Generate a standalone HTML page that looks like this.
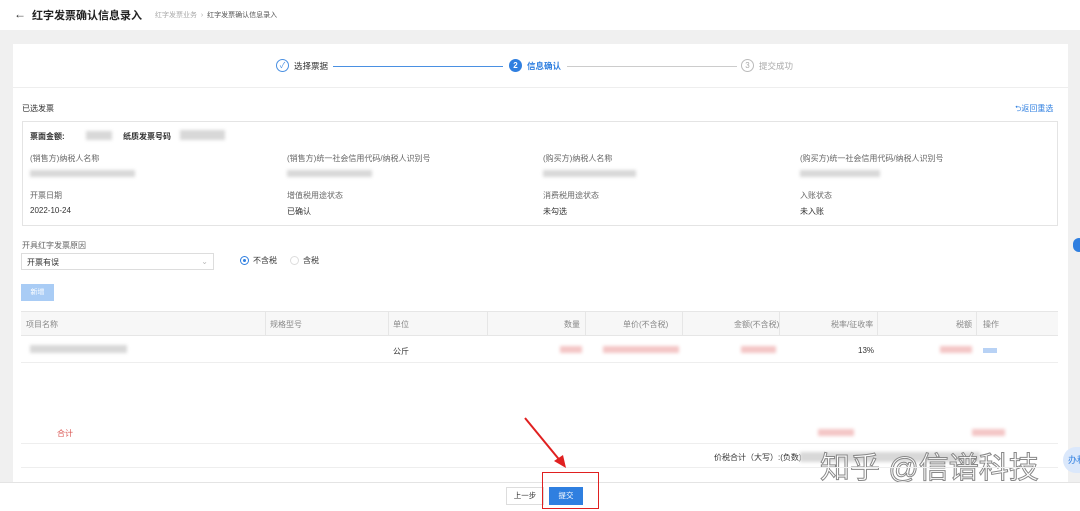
<!DOCTYPE html><html><head><meta charset="utf-8"><style>
*{margin:0;padding:0;box-sizing:border-box}
body{width:1080px;height:511px;overflow:hidden;background:#f0f0f0;font-family:"Liberation Sans","Noto Sans CJK SC",sans-serif;font-size:8px;color:#333;position:relative}
.a{position:absolute}
.blur{position:absolute;background:#d8d8d8;filter:blur(1.5px)}
.pink{position:absolute;background:#f4c6c6;filter:blur(1.5px)}
.g{color:#666}
</style></head><body>
<div class="a" style="left:0;top:0;width:1080px;height:30px;background:#fff"></div>
<div class="a" style="left:14px;top:7px;font-size:12px">←</div>
<div class="a" style="left:32px;top:7px;font-size:11px;font-weight:bold;color:#222">红字发票确认信息录入</div>
<div class="a" style="left:155px;top:10px;font-size:7px;color:#aaa">红字发票业务 &nbsp;›&nbsp; <span style="color:#555">红字发票确认信息录入</span></div>
<div class="a" style="left:13px;top:44px;width:1055px;height:440px;background:#fff"></div>
<div class="a" style="left:13px;top:87px;width:1055px;height:1px;background:#eee"></div>
<div class="a" style="left:276px;top:59px;width:13px;height:13px;border:1px solid #4a90e2;border-radius:50%;color:#4a90e2;font-size:8px;text-align:center;line-height:11px">✓</div>
<div class="a" style="left:294px;top:60px;font-size:8.5px">选择票据</div>
<div class="a" style="left:333px;top:66px;width:170px;height:1px;background:#4a90e2"></div>
<div class="a" style="left:509px;top:59px;width:13px;height:13px;background:#2f7fe0;border-radius:50%;color:#fff;font-size:8px;text-align:center;line-height:13px;font-weight:bold">2</div>
<div class="a" style="left:527px;top:60px;font-size:8.5px;color:#2f7fe0;font-weight:bold">信息确认</div>
<div class="a" style="left:567px;top:66px;width:170px;height:1px;background:#ccc"></div>
<div class="a" style="left:741px;top:59px;width:13px;height:13px;border:1px solid #bbb;border-radius:50%;color:#aaa;font-size:8px;text-align:center;line-height:11px">3</div>
<div class="a" style="left:759px;top:60px;font-size:8.5px;color:#aaa">提交成功</div>
<div class="a" style="left:22px;top:103px;font-size:8px">已选发票</div>
<div class="a" style="left:1015px;top:103px;font-size:8px;color:#2f7fe0">⮌返回重选</div>
<div class="a" style="left:22px;top:121px;width:1036px;height:105px;border:1px solid #e4e4e4"></div>
<div class="a" style="left:30px;top:131px;font-size:8px;font-weight:bold">票面金额:</div><div class="blur" style="left:86px;top:131px;width:26px;height:9px"></div>
<div class="a" style="left:123px;top:131px;font-size:8px;font-weight:bold">纸质发票号码</div><div class="blur" style="left:180px;top:130px;width:45px;height:10px"></div>
<div class="a g" style="left:30px;top:153px">(销售方)纳税人名称</div><div class="blur" style="left:30px;top:170px;width:105px;height:7px"></div>
<div class="a g" style="left:287px;top:153px">(销售方)统一社会信用代码/纳税人识别号</div><div class="blur" style="left:287px;top:170px;width:85px;height:7px"></div>
<div class="a g" style="left:543px;top:153px">(购买方)纳税人名称</div><div class="blur" style="left:543px;top:170px;width:93px;height:7px"></div>
<div class="a g" style="left:800px;top:153px">(购买方)统一社会信用代码/纳税人识别号</div><div class="blur" style="left:800px;top:170px;width:80px;height:7px"></div>
<div class="a g" style="left:30px;top:190px">开票日期</div><div class="a" style="left:30px;top:206px">2022-10-24</div>
<div class="a g" style="left:287px;top:190px">增值税用途状态</div><div class="a" style="left:287px;top:206px">已确认</div>
<div class="a g" style="left:543px;top:190px">消费税用途状态</div><div class="a" style="left:543px;top:206px">未勾选</div>
<div class="a g" style="left:800px;top:190px">入账状态</div><div class="a" style="left:800px;top:206px">未入账</div>
<div class="a g" style="left:22px;top:240px">开具红字发票原因</div>
<div class="a" style="left:21px;top:253px;width:193px;height:17px;border:1px solid #ddd;padding:3px 5px">开票有误<span style="float:right;color:#bbb">⌄</span></div>
<div class="a" style="left:240px;top:256px;width:9px;height:9px;border:1px solid #2f7fe0;border-radius:50%"><div style="margin:2px;width:3px;height:3px;background:#2f7fe0;border-radius:50%"></div></div>
<div class="a" style="left:253px;top:255px">不含税</div>
<div class="a" style="left:290px;top:256px;width:9px;height:9px;border:1px solid #ddd;border-radius:50%"></div>
<div class="a" style="left:303px;top:255px">含税</div>
<div class="a" style="left:21px;top:284px;width:33px;height:17px;background:#a9ccf5;color:#fff;text-align:center;line-height:17px;font-size:7px">新增</div>
<div class="a" style="left:21px;top:311px;width:1037px;height:25px;background:#f7f7f7;border-top:1px solid #e6e6e6;border-bottom:1px solid #e6e6e6"></div>
<div class="a g" style="left:26px;top:319px;color:#888">项目名称</div>
<div class="a" style="left:265px;top:311px;width:1px;height:25px;background:#e6e6e6"></div>
<div class="a" style="left:270px;top:319px;color:#888">规格型号</div>
<div class="a" style="left:388px;top:311px;width:1px;height:25px;background:#e6e6e6"></div>
<div class="a" style="left:393px;top:319px;color:#888">单位</div>
<div class="a" style="left:487px;top:311px;width:1px;height:25px;background:#e6e6e6"></div>
<div class="a" style="left:564px;top:319px;color:#888">数量</div>
<div class="a" style="left:585px;top:311px;width:1px;height:25px;background:#e6e6e6"></div>
<div class="a" style="left:623px;top:319px;color:#888">单价(不含税)</div>
<div class="a" style="left:682px;top:311px;width:1px;height:25px;background:#e6e6e6"></div>
<div class="a" style="left:734px;top:319px;color:#888">金额(不含税)</div>
<div class="a" style="left:779px;top:311px;width:1px;height:25px;background:#e6e6e6"></div>
<div class="a" style="left:831px;top:319px;color:#888">税率/征收率</div>
<div class="a" style="left:877px;top:311px;width:1px;height:25px;background:#e6e6e6"></div>
<div class="a" style="left:956px;top:319px;color:#888">税额</div>
<div class="a" style="left:976px;top:311px;width:1px;height:25px;background:#e6e6e6"></div>
<div class="a" style="left:983px;top:319px;color:#888">操作</div>
<div class="blur" style="left:30px;top:345px;width:97px;height:8px"></div>
<div class="a" style="left:393px;top:346px">公斤</div>
<div class="pink" style="left:560px;top:346px;width:22px;height:7px"></div>
<div class="pink" style="left:603px;top:346px;width:76px;height:7px"></div>
<div class="pink" style="left:741px;top:346px;width:35px;height:7px"></div>
<div class="a" style="left:858px;top:346px">13%</div>
<div class="pink" style="left:940px;top:346px;width:32px;height:7px"></div>
<div class="a" style="left:983px;top:348px;width:14px;height:5px;background:#b8d2f5"></div>
<div class="a" style="left:21px;top:362px;width:1037px;height:1px;background:#eee"></div>
<div class="a" style="left:57px;top:428px;color:#d9534f">合计</div>
<div class="pink" style="left:818px;top:429px;width:36px;height:7px"></div>
<div class="pink" style="left:972px;top:429px;width:33px;height:7px"></div>
<div class="a" style="left:21px;top:443px;width:1037px;height:1px;background:#eee"></div>
<div class="a" style="left:714px;top:452px;font-size:8px">价税合计（大写）:(负数)</div>
<div class="blur" style="left:800px;top:452px;width:180px;height:10px"></div>
<div class="a" style="left:820px;top:443px;font-size:30px;color:#fff;-webkit-text-stroke:1px #888">知乎 @信谱科技</div>
<div class="a" style="left:1063px;top:447px;width:30px;height:26px;background:#dbe8fb;border-radius:13px 0 0 13px;color:#2f7fe0;font-size:9px;line-height:26px;padding-left:5px">办税</div>
<div class="a" style="left:21px;top:467px;width:1037px;height:1px;background:#eee"></div>
<div class="a" style="left:1073px;top:238px;width:12px;height:14px;background:#2f7fe0;border-radius:7px"></div>
<div class="a" style="left:0;top:482px;width:1080px;height:29px;background:#fff;border-top:1px solid #e4e4e4"></div>
<div class="a" style="left:506px;top:487px;width:38px;height:18px;border:1px solid #ddd;text-align:center;line-height:16px;font-size:7.5px">上一步</div>
<div class="a" style="left:549px;top:487px;width:34px;height:18px;background:#2f7fe0;color:#fff;text-align:center;line-height:18px;font-size:7.5px">提交</div>
<div class="a" style="left:542px;top:472px;width:57px;height:37px;border:1.5px solid #e02020"></div>
<svg class="a" style="left:520px;top:415px" width="50" height="55"><line x1="5" y1="3" x2="42" y2="48" stroke="#e02020" stroke-width="2"/><polygon points="46,53 34,46 43,40" fill="#e02020"/></svg>
</body></html>
